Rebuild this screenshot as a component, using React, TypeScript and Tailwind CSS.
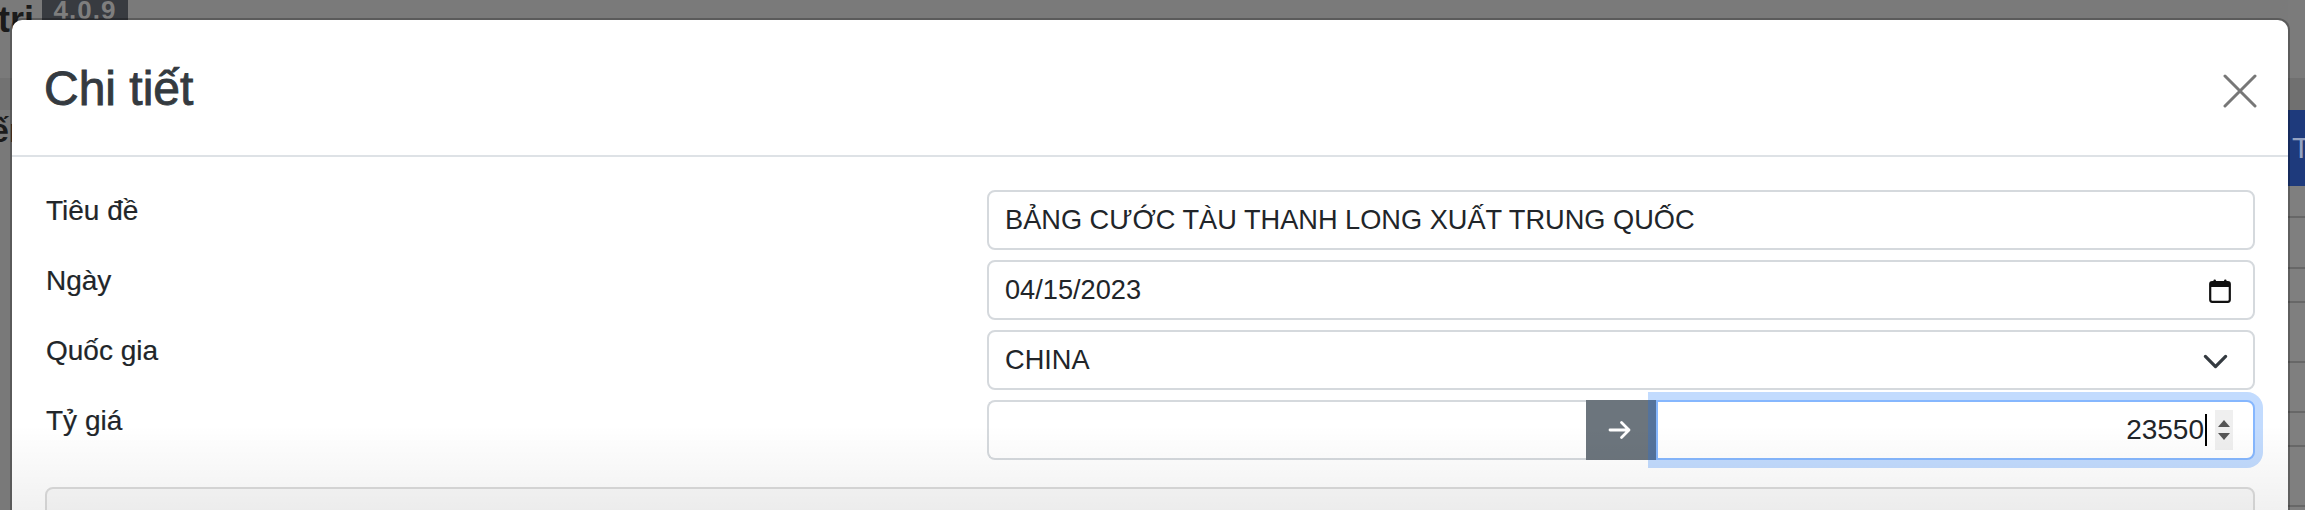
import React from "react";

const F = "font-['Liberation_Sans',Arial,sans-serif]";

function CalendarIcon() {
  return (
    <svg width="22" height="24" viewBox="0 0 22 24" fill="none">
      <rect x="1.2" y="3" width="19.6" height="19.8" rx="2" stroke="#111" strokeWidth="2.2" />
      <rect x="1.2" y="3" width="19.6" height="5" fill="#111" />
      <rect x="4.5" y="0.5" width="2.4" height="4" rx="1" fill="#111" />
      <rect x="15.1" y="0.5" width="2.4" height="4" rx="1" fill="#111" />
    </svg>
  );
}

function Chevron() {
  return (
    <svg width="27" height="27" viewBox="0 0 16 16" fill="none">
      <path d="m2 5 6 6 6-6" stroke="#343a40" strokeWidth="1.9" strokeLinecap="round" strokeLinejoin="round" />
    </svg>
  );
}

function ArrowRight() {
  return (
    <svg width="26" height="26" viewBox="0 0 26 26" fill="none">
      <path d="M3 13 H22 M14.5 5.5 L22 13 L14.5 20.5" stroke="#fff" strokeWidth="2.8" strokeLinecap="round" strokeLinejoin="round" />
    </svg>
  );
}

function CloseX() {
  return (
    <svg width="34" height="34" viewBox="0 0 34 34" fill="none">
      <path d="M2 2 L32 32 M32 2 L2 32" stroke="#777" strokeWidth="3" strokeLinecap="round" />
    </svg>
  );
}

const inputBase =
  "h-[60px] border-2 border-[#d5d9dd] bg-white flex items-center pl-[16px] pr-[20px] text-[27.2px] leading-[42px] text-[#212529]";

function Label({ children }: { children: React.ReactNode }) {
  return <div className="text-[28px] leading-[42px] text-[#212529] pl-[1px] [-webkit-text-stroke:0.2px_#212529]">{children}</div>;
}

export default function App() {
  const rowLines = [218, 269, 303, 363, 413, 447, 507];
  return (
    <div className={`${F} relative w-[2305px] h-[510px] overflow-hidden bg-[#7d7d7d]`}>
      {/* background page (dimmed) */}
      <div className="flex h-full w-full">
        <div className="w-[12px] flex flex-col">
          <div className="h-[78px] bg-[#7a7a7a] relative">
            <div className="font-bold text-[36px] leading-[36px] text-[#1b1b1b] -ml-[2px] mt-[2px] whitespace-nowrap">tri</div>
          </div>
          <div className="h-[32px] bg-[#727272]" />
          <div className="flex-1 bg-[#797979] overflow-hidden">
            <div className="font-bold text-[34px] leading-[40px] text-[#1b1b1b] -ml-[10px] whitespace-nowrap">ến</div>
          </div>
        </div>
        <div className="flex-1 flex flex-col">
          <div className="h-[78px] bg-[#7a7a7a] flex items-start">
            <div className="ml-[30px] h-[26px] w-[86px] bg-[#383b40] flex justify-center">
              <span className="font-bold text-[26px] leading-[20px] text-[#7e7e7e] tracking-[1px]">4.0.9</span>
            </div>
          </div>
          <div className="flex-1 bg-[#7d7d7d]" />
        </div>
        <div className="w-[17px] flex flex-col bg-[#7f7f7f]">
          <div className="h-[78px] bg-[#7b7b7b]" />
          <div className="h-[32px] bg-[#707070]" />
          <div className="h-[76px] bg-[#1e3a7c] flex items-center pl-[4px]">
            <span className="text-[30px] text-[#95a3c2] leading-none">T</span>
          </div>
          {rowLines.map((y, i) => (
            <div
              key={y}
              style={{ marginTop: (i === 0 ? y - 186 : y - rowLines[i - 1]) - 2 }}
              className="h-[2px] bg-[#676767] shrink-0"
            />
          ))}
        </div>
      </div>

      {/* modal */}
      <div className="absolute left-[10px] top-[18px] w-[2280px] h-[520px] bg-white bg-clip-padding border-2 border-black/25 rounded-t-[12px] flex flex-col">
        {/* header */}
        <div className="h-[137px] border-b-2 border-[#dee2e6] flex items-center justify-between pl-[32px] pr-[31px] shrink-0">
          <h5 className="text-[48px] leading-[58px] text-[#343a40] mt-[2px] [-webkit-text-stroke:0.9px_#343a40]">Chi tiết</h5>
          <div className="mt-[6px]">
            <CloseX />
          </div>
        </div>
        {/* body */}
        <div className="pt-[33px] pl-[33px] pr-[33px] flex flex-col">
          <div className="grid grid-cols-[942px_1fr] gap-y-[10px]">
            <Label>Tiêu đề</Label>
            <div className={`${inputBase} rounded-[8px]`}>BẢNG CƯỚC TÀU THANH LONG XUẤT TRUNG QUỐC</div>

            <Label>Ngày</Label>
            <div className={`${inputBase} rounded-[8px] justify-between`}>
              <span>04/15/2023</span>
              <span className="mr-[2px] mt-[1px]"><CalendarIcon /></span>
            </div>

            <Label>Quốc gia</Label>
            <div className={`${inputBase} rounded-[8px] justify-between`}>
              <span>CHINA</span>
              <span className="mr-[4px] mt-[2px]"><Chevron /></span>
            </div>

            <Label>Tỷ giá</Label>
            <div className="flex h-[60px]">
              <div className="w-[599px] h-[60px] border-2 border-r-0 border-[#d5d9dd] rounded-l-[8px] bg-white" />
              <div className="w-[70px] h-[60px] bg-[#6c757d] flex items-center justify-center pr-[2px]">
                <ArrowRight />
              </div>
              <div className="relative z-10 flex-1 h-[60px] border-2 border-[#86b7fe] rounded-r-[8px] bg-white shadow-[0_0_0_8px_rgba(13,110,253,0.25)] flex items-center justify-end pr-[20px]">
                <span className="text-[28px] leading-[42px] text-[#212529]">23550</span>
                <span className="w-[2px] h-[32px] bg-black ml-[1px]" />
                <div className="ml-[8px] w-[18px] h-[40px] bg-[#efefef] flex flex-col items-center justify-center gap-[6px]">
                  <div className="w-0 h-0 border-l-[6px] border-r-[6px] border-b-[7px] border-l-transparent border-r-transparent border-b-[#555]" />
                  <div className="w-0 h-0 border-l-[6px] border-r-[6px] border-t-[7px] border-l-transparent border-r-transparent border-t-[#555]" />
                </div>
              </div>
            </div>
          </div>
          <div className="mt-[27px] h-[80px] border-2 border-[#dcdcdc] rounded-[8px] bg-[#fafafa]" />
        </div>
      </div>

      {/* bottom fade overlay */}
      <div className="absolute left-[12px] w-[2276px] top-[425px] h-[85px] bg-gradient-to-b from-black/0 to-black/[0.055] pointer-events-none z-20" />
    </div>
  );
}
